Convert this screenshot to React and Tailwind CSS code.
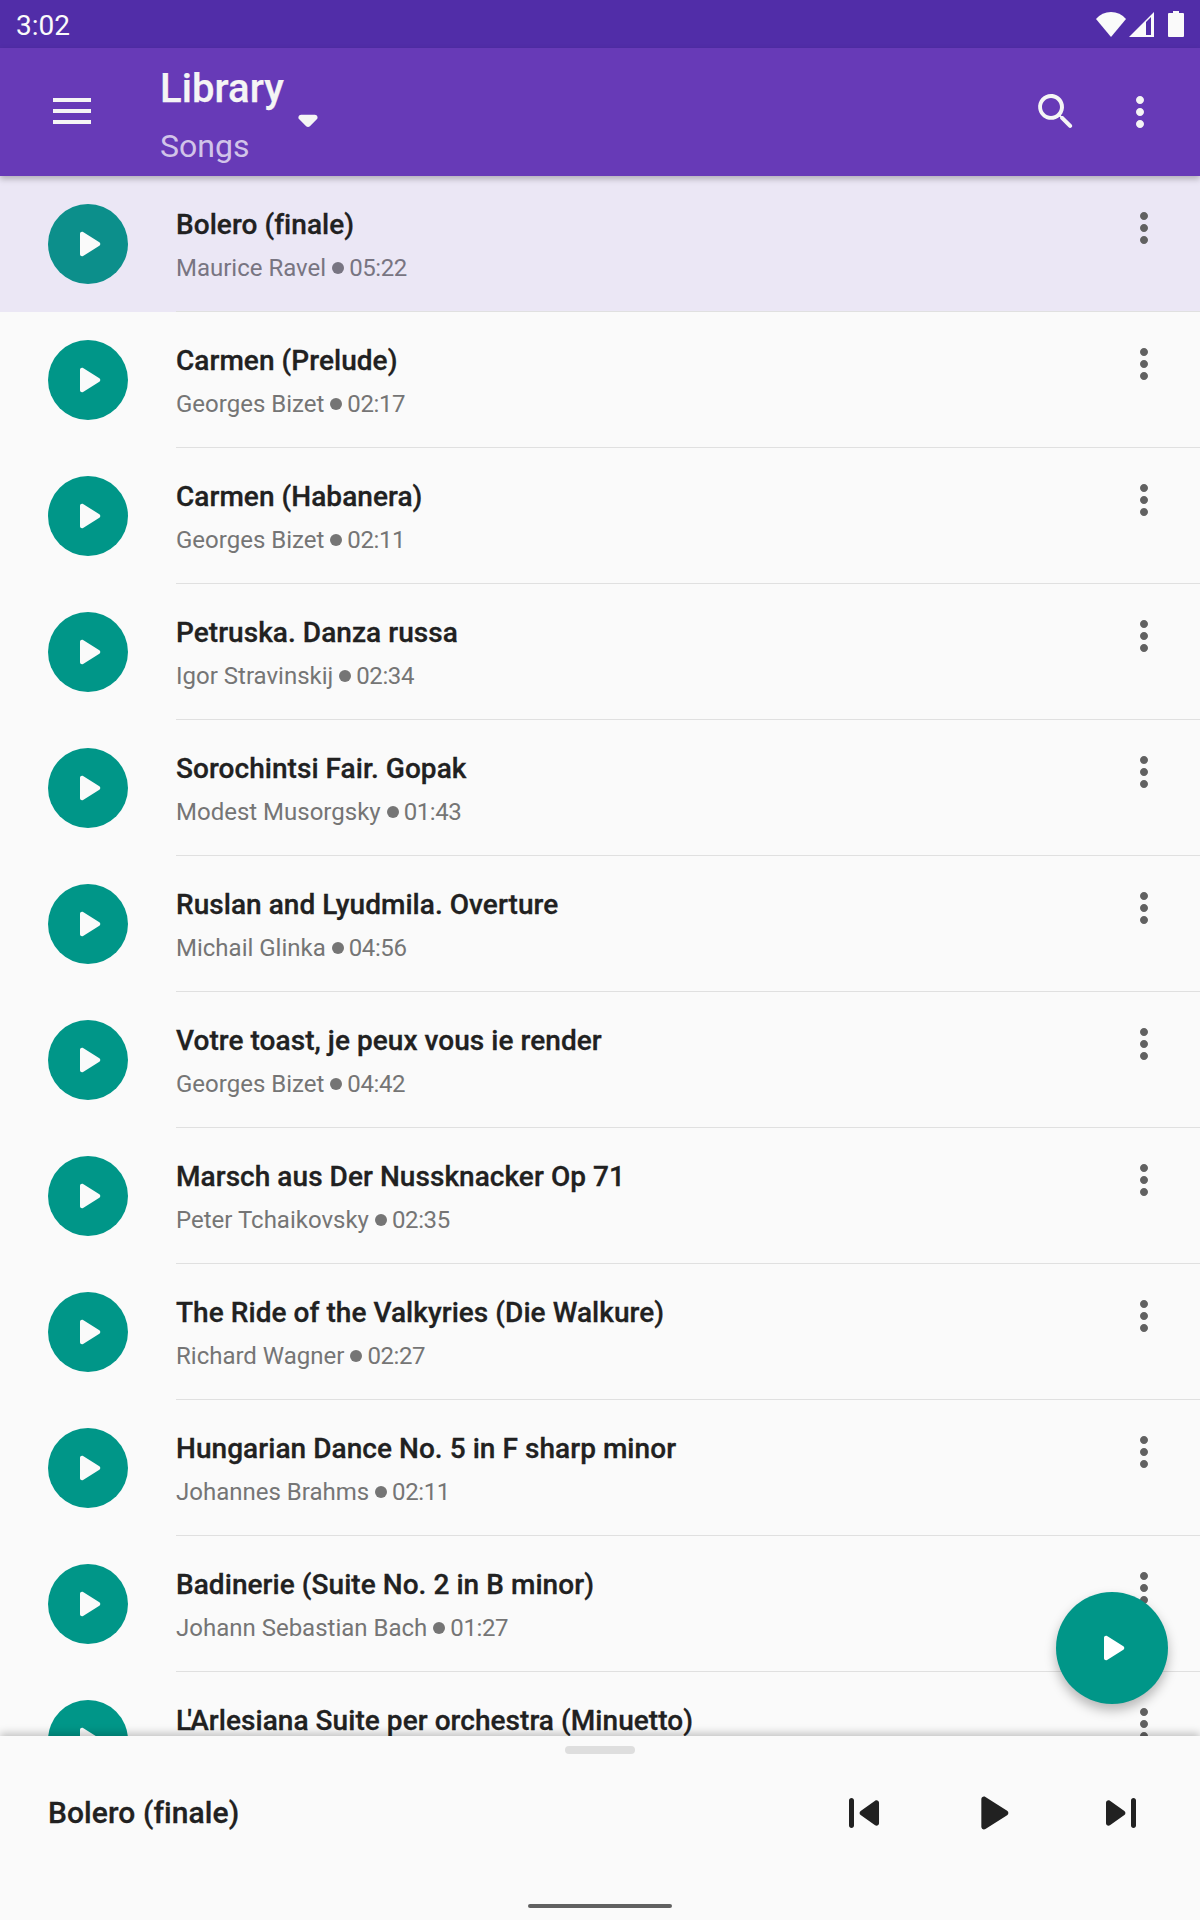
import React from 'react';

const songs = [
    { title: 'Bolero (finale)', artist: 'Maurice Ravel', time: '05:22', selected: true },
    { title: 'Carmen (Prelude)', artist: 'Georges Bizet', time: '02:17' },
    { title: 'Carmen (Habanera)', artist: 'Georges Bizet', time: '02:11' },
    { title: 'Petruska. Danza russa', artist: 'Igor Stravinskij', time: '02:34' },
    { title: 'Sorochintsi Fair. Gopak', artist: 'Modest Musorgsky', time: '01:43' },
    { title: 'Ruslan and Lyudmila. Overture', artist: 'Michail Glinka', time: '04:56' },
    { title: 'Votre toast, je peux vous ie render', artist: 'Georges Bizet', time: '04:42' },
    { title: 'Marsch aus Der Nussknacker Op 71', artist: 'Peter Tchaikovsky', time: '02:35' },
    { title: 'The Ride of the Valkyries (Die Walkure)', artist: 'Richard Wagner', time: '02:27' },
    { title: 'Hungarian Dance No. 5 in F sharp minor', artist: 'Johannes Brahms', time: '02:11' },
    { title: 'Badinerie (Suite No. 2 in B minor)', artist: 'Johann Sebastian Bach', time: '01:27' },
    { title: <><span className="tracking-[-4px]">L</span>'Arlesiana Suite per orchestra (Minuetto)</>, artist: 'Georges Bizet', time: '03:12' },
];

const PLAY = 'M8 6.82v10.36c0 .79.87 1.27 1.54.84l8.14-5.18c.62-.39.62-1.29 0-1.69L9.54 5.98C8.87 5.55 8 6.03 8 6.82z';
const PREV = 'M7 6c.55 0 1 .45 1 1v10c0 .55-.45 1-1 1s-1-.45-1-1V7c0-.55.45-1 1-1zm3.66 6.82l5.77 4.07c.66.47 1.58-.01 1.58-.82V7.93c0-.81-.91-1.28-1.58-.82l-5.77 4.07c-.57.4-.57 1.24 0 1.64z';
const NEXT = 'M7.58 16.89l5.77-4.07c.56-.4.56-1.24 0-1.63L7.58 7.11C6.91 6.65 6 7.12 6 7.93v8.14c0 .81.91 1.28 1.58.82zM16 7v10c0 .55.45 1 1 1s1-.45 1-1V7c0-.55-.45-1-1-1s-1 .45-1 1z';
const SEARCH = 'M15.5 14h-.79l-.28-.27c1.2-1.4 1.82-3.31 1.48-5.34-.47-2.78-2.79-5-5.59-5.34-4.2-.52-7.72 3-7.2 7.2.34 2.8 2.56 5.12 5.34 5.59 2.03.34 3.94-.28 5.34-1.48l.27.28v.79l4.25 4.25c.41.41 1.08.41 1.49 0 .41-.41.41-1.08 0-1.49L15.5 14zm-6 0C7.01 14 5 11.99 5 9.5S7.01 5 9.5 5 14 7.01 14 9.5 11.99 14 9.5 14z';
const DROP = 'M8.71 11.71l2.59 2.59c.39.39 1.02.39 1.41 0l2.59-2.59c.63-.63.18-1.71-.71-1.71H9.41c-.89 0-1.33 1.08-.7 1.71z';
const MORE = 'M12 8c1.1 0 2-.9 2-2s-.9-2-2-2-2 .9-2 2 .9 2 2 2zm0 2c-1.1 0-2 .9-2 2s.9 2 2 2 2-.9 2-2-.9-2-2-2zm0 6c-1.1 0-2 .9-2 2s.9 2 2 2 2-.9 2-2-.9-2-2-2z';

function Icon({ d, className }) {
    return (
        <svg viewBox="0 0 24 24" fill="currentColor" className={className}>
            <path d={d} />
        </svg>
    );
}

function StatusBar() {
    return (
        <div className="h-12 shrink-0 bg-[#512da8] flex items-center justify-between pl-4 pr-4 text-[#fafafa]">
            <span className="text-[28px] leading-none mt-[3px]">3:02</span>
            <div className="flex items-center">
                <svg viewBox="0 0 30 25" fill="currentColor" className="w-[30px] h-[25px]">
                    <path d="M15 25 L0 7 Q6 0 15 0 Q24 0 30 7 Z" />
                </svg>
                <svg viewBox="0 0 25 25" fill="currentColor" className="w-[25px] h-[25px] ml-[3px]">
                    <path fillRule="evenodd" d="M25 0V25H0ZM22 5 17 10V23H22Z" />
                </svg>
                <svg viewBox="0 0 16 26" fill="currentColor" className="w-4 h-[26px] ml-[14px]">
                    <path d="M5 0H11V2H15Q16 2 16 3V25Q16 26 15 26H1Q0 26 0 25V3Q0 2 1 2H5Z" />
                </svg>
            </div>
        </div>
    );
}

function Toolbar() {
    return (
        <div className="relative z-10 h-32 shrink-0 bg-[#673ab7] flex items-center text-[#f5f5f5] shadow-[0_3px_6px_rgba(0,0,0,0.25)]">
            <div className="w-[160px] shrink-0 pl-[53px] -mt-[2px] flex flex-col gap-[7px]">
                <span className="block w-[38px] h-1 bg-[#f5f5f5]" />
                <span className="block w-[38px] h-1 bg-[#f5f5f5]" />
                <span className="block w-[38px] h-1 bg-[#f5f5f5]" />
            </div>
            <div className="flex flex-col w-[125px] shrink-0 mt-[6px]">
                <span className="text-[40px] leading-[48px] font-medium tracking-[0.1px] [-webkit-text-stroke:0.25px_#f5f5f5]">Library</span>
                <span className="text-[32px] leading-[40px] text-[#d1c4e9] mt-[13px]">Songs</span>
            </div>
            <Icon d={DROP} className="w-16 h-16 -ml-[9px] mt-4 shrink-0" />
            <div className="ml-auto flex items-center pr-9">
                <Icon d={SEARCH} className="w-12 h-12" />
                <Icon d={MORE} className="w-12 h-12 ml-9" />
            </div>
        </div>
    );
}

function SongRow({ song }) {
    return (
        <div className={`h-[136px] shrink-0 flex ${song.selected ? 'bg-[#ebe7f5]' : ''}`}>
            <div className="w-[176px] shrink-0 pl-12 flex items-center">
                <div className={`w-20 h-20 rounded-full flex items-center justify-center text-[#fafafa] ${song.selected ? 'bg-[#0c8f8b]' : 'bg-[#009688]'}`}>
                    <Icon d={PLAY} className="w-12 h-12" />
                </div>
            </div>
            <div className="flex-1 min-w-0 flex border-b border-[#e0e0e0]">
                <div className="flex-1 min-w-0 pt-[31px]">
                    <div className="text-[28px] leading-9 font-medium tracking-[0.05px] [-webkit-text-stroke:0.3px_#212121] text-[#212121]">{song.title}</div>
                    <div className={`mt-[9px] flex items-center text-2xl leading-8 ${song.selected ? 'text-[#787582]' : 'text-[#757575]'}`}>
                        <span>{song.artist}</span>
                        <span className={`w-3 h-3 rounded-full ml-[6px] mr-[5px] ${song.selected ? 'bg-[#787582]' : 'bg-[#757575]'}`} />
                        <span className="tracking-[-0.4px]">{song.time}</span>
                    </div>
                </div>
                <div className="w-12 mr-8 mt-7 shrink-0 text-[#616161]">
                    <Icon d={MORE} className="w-12 h-12" />
                </div>
            </div>
        </div>
    );
}

function BottomPanel() {
    return (
        <div className="relative z-10 h-[184px] shrink-0 bg-[#fafafa] shadow-[0_-3px_8px_rgba(0,0,0,0.22)] flex flex-col items-center">
            <span className="block mt-[10px] w-[70px] h-2 rounded-full bg-[#dedede]" />
            <div className="w-full flex items-center pl-12 pr-[49px] mt-[27px] text-[#212121]">
                <span className="text-[30px] leading-10 font-medium tracking-[0.08px] [-webkit-text-stroke:0.3px_#212121]">Bolero (finale)</span>
                <Icon d={PREV} className="w-[60px] h-[60px] ml-auto" />
                <Icon d={PLAY} className="w-16 h-16 ml-[66px]" />
                <Icon d={NEXT} className="w-[60px] h-[60px] ml-[67px]" />
            </div>
            <span className="block mt-[59px] w-36 h-1 rounded-full bg-[#616161]" />
        </div>
    );
}

export default function App() {
    return (
        <div className="relative h-[1920px] overflow-hidden flex flex-col bg-[#fafafa] font-['Roboto',sans-serif]">
            <StatusBar />
            <Toolbar />
            <div className="flex-1 min-h-0 overflow-hidden flex flex-col">
                {songs.map((song) => (
                    <SongRow key={song.artist + song.time} song={song} />
                ))}
            </div>
            <BottomPanel />
            <button className="absolute z-20 left-[1056px] top-[1592px] w-28 h-28 rounded-full bg-[#009688] text-white flex items-center justify-center shadow-[0_6px_12px_rgba(0,0,0,0.28)]">
                <Icon d={PLAY} className="w-12 h-12" />
            </button>
        </div>
    );
}
